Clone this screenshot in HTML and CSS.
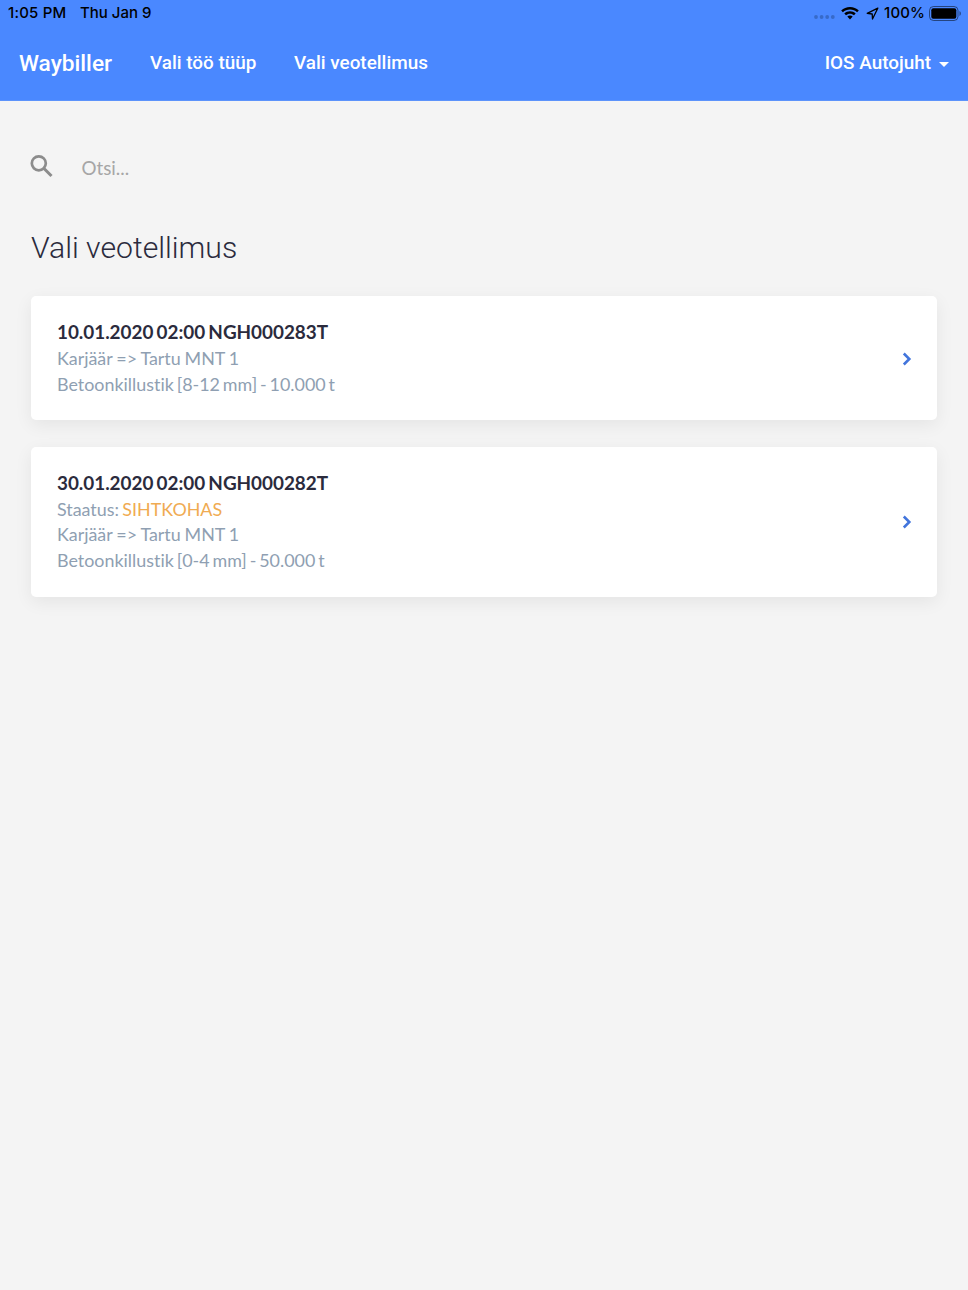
FILE: index.html
```html
<!DOCTYPE html>
<html lang="et">
<head>
<meta charset="utf-8">
<title>Waybiller</title>
<link rel="stylesheet" href="styles.css">
</head>
<body>
<header class="top">
  <div class="status">
    <span class="time">1:05 PM</span><span class="date">Thu Jan 9</span>
    <div class="indicators">
      <svg class="dots" width="21" height="4" viewBox="0 0 21 4"><circle cx="2" cy="2" r="1.9"/><circle cx="7.6" cy="2" r="1.9"/><circle cx="13.2" cy="2" r="1.9"/><circle cx="18.8" cy="2" r="1.9"/></svg>
      <svg class="wifi" width="18" height="13" viewBox="0 0 18 13"><path d="M9 0C5.600 0 2.500 1.300.2 3.500l1.700 1.800C3.800 3.500 6.200 2.500 9 2.500s5.200 1 7.100 2.800l1.700-1.800C15.500 1.300 12.400 0 9 0zM9 4.200c-2.200 0-4.200.8-5.700 2.300L5 8.300c1.100-1 2.500-1.600 4-1.600s2.900.6 4 1.600l1.700-1.800C13.200 5 11.200 4.200 9 4.200zM9 8.400c-1 0-2 .4-2.700 1.100L9 12.500l2.700-3C11 8.800 10 8.400 9 8.400z"/></svg>
      <svg class="loc" width="13" height="13" viewBox="0 0 13 13"><path d="M11.800 1.200L1.200 6.300l5 .7.300 5z" fill="none" stroke="#000" stroke-width="1.300" stroke-linejoin="round"/></svg>
      <span class="pct">100%</span>
      <svg class="battery" width="32" height="15" viewBox="0 0 32 15"><rect x=".5" y=".5" width="28.500" height="14" rx="4" fill="none" stroke="#000" stroke-opacity=".5"/><rect x="2.300" y="2.300" width="25" height="10.400" rx="2"/><path d="M30.500 5c1.800.8 1.800 4.200 0 5z" fill-opacity=".5"/></svg>
    </div>
  </div>
  <nav class="nav">
    <a class="brand">Waybiller</a>
    <a class="link first">Vali töö tüüp</a>
    <a class="link second">Vali veotellimus</a>
    <a class="link user">IOS Autojuht</a><span class="caret"></span>
  </nav>
</header>
<main>
  <div class="search">
    <svg width="24" height="24" viewBox="0 0 24 24"><circle cx="8.800" cy="9.300" r="7" fill="none" stroke="#8c8c8c" stroke-width="2.700"/><path d="M14 14.500l7.500 7.500" stroke="#8c8c8c" stroke-width="3"/></svg>
    <span>Otsi...</span>
  </div>
  <h1>Vali veotellimus</h1>
  <article class="card">
    <div>
      <h2>10.01.2020 02:00 NGH000283T</h2>
      <p class="route">Karjäär =&gt; Tartu MNT 1</p>
      <p class="cargo">Betoonkillustik [8-12 mm] - 10.000 t</p>
    </div>
    <svg class="chev" width="10" height="14" viewBox="0 0 10 14"><path d="M1.800 1.500L7.300 7l-5.500 5.500"/></svg>
  </article>
  <article class="card">
    <div>
      <h2>30.01.2020 02:00 NGH000282T</h2>
      <p>Staatus: <span class="state">SIHTKOHAS</span></p>
      <p class="route">Karjäär =&gt; Tartu MNT 1</p>
      <p class="cargo">Betoonkillustik [0-4 mm] - 50.000 t</p>
    </div>
    <svg class="chev" width="10" height="14" viewBox="0 0 10 14"><path d="M1.800 1.500L7.300 7l-5.500 5.500"/></svg>
  </article>
</main>
</body>
</html>
```
FILE: styles.css
```css
* { box-sizing: border-box; }
body { margin: 0; min-height: 1290px; background: #f4f4f4; font-family: Lato, sans-serif; font-variant-ligatures: none; }
.top { height: 101px; background: #4a88ff; border-bottom: 1px solid #5c93fb; }
.status { display: flex; align-items: center; height: 26px; padding: 0 8px; font: 500 15px/26px Inter, sans-serif; color: #000; }
.time { width: 72px; white-space: nowrap; letter-spacing: .2px; }
.indicators { display: flex; align-items: center; margin: 0 -1px 0 auto; }
.dots { fill: #376ac9; margin: 7px 6px 0 0; }
.wifi { margin-right: 7px; }
.loc { margin-right: 5px; }
.pct { margin-right: 4px; letter-spacing: .1px; }
.nav { display: flex; align-items: center; height: 74px; padding: 0 19px; color: #fff; font-family: Roboto, sans-serif; font-weight: 500; }
.brand { width: 131px; font-size: 22.700px; }
.link { font-size: 18.900px; line-height: 24px; white-space: nowrap; }
.first { width: 144px; }
.user { margin-left: auto; }
.caret { margin: 2px 0 0 8px; border: 5px solid transparent; border-top-color: #fff; border-bottom: 0; }
main { padding: 53px 31px 0; }
.search { display: flex; height: 27px; margin-left: -1px; color: #a6a6a6; font-size: 18.800px; }
.search span { margin-left: 27.500px; line-height: 28px; }
h1 { height: 40px; margin: 47px 0 28px; font: 300 30.200px/39px Roboto, sans-serif; color: #2b2b3d; }
.card { display: flex; align-items: center; justify-content: space-between; min-height: 124px; margin: 0 0 27px .4px; padding: 22px 25px 23px 25.600px; background: #fff; border-radius: 5px; box-shadow: 0 5px 18px rgba(0,0,0,.065); }
.card + .card { min-height: 150px; padding-bottom: 24px; }
h2 { margin: 0; font-size: 18.900px; line-height: 28px; font-weight: 700; color: #2b2b3d; word-spacing: -1.300px; letter-spacing: -.03px; }
p { margin: 0; font-size: 17.900px; line-height: 25.200px; color: #8f9fb2; word-spacing: -1.200px; }
.route { word-spacing: -.700px; }
.cargo { word-spacing: -1.700px; }
.state { color: #f0ab52; }
.chev { position: relative; top: 1px; fill: none; stroke: #4275dc; stroke-width: 2.600; }
```
